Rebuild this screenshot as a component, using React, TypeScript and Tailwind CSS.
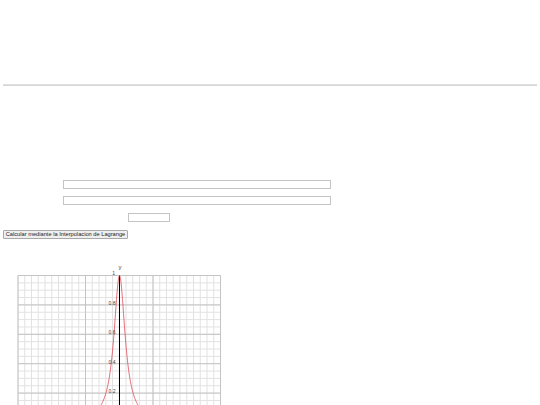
import React from "react";

// plot area, in svg coordinates
const GX = 18;
const GY = 17.5;
const GW = 202.5;
const GH = 170;
const AXIS = GX + 101.5;
const UNIT_Y = 147;

function curvePath() {
  const pts: string[] = [];
  for (let dx = -101.5; dx <= 101; dx += 0.5) {
    const v = 1 / (1 + (dx / 6.8) ** 2);
    const x = AXIS + dx;
    const y = GY + (1 - v) * UNIT_Y;
    pts.push(`${pts.length ? "L" : "M"}${x.toFixed(2)},${y.toFixed(2)}`);
  }
  return pts.join(" ");
}

function Chart() {
  const minorX: number[] = [];
  for (let x = 0; x <= GW + 0.1; x += 6.75) minorX.push(GX + x);
  const majorX = [0, 67.5, 135, 202.5].map((x) => GX + x);
  const minorY: number[] = [];
  for (let y = 0; y <= GH; y += 7.35) minorY.push(GY + y);
  const majorY: number[] = [];
  for (let y = 0; y <= GH; y += 29.4) majorY.push(GY + y);
  const labels = [
    { t: "0.8", y: GY + 29.4 },
    { t: "0.6", y: GY + 58.8 },
    { t: "0.4", y: GY + 88.2 },
    { t: "0.2", y: GY + 117.6 },
  ];

  return (
    <svg width="230" height="147" className="block" style={{ fontFamily: "'Liberation Sans', Arial, sans-serif" }}>
      <defs>
        <clipPath id="plot">
          <rect x={GX} y={GY} width={GW} height={GH} />
        </clipPath>
      </defs>
      <g stroke="#e2e2e2" strokeWidth="1">
        {minorX.map((x) => (
          <line key={"mx" + x} x1={x} y1={GY} x2={x} y2={GY + GH} />
        ))}
        {minorY.map((y) => (
          <line key={"my" + y} x1={GX} y1={y} x2={GX + GW} y2={y} />
        ))}
      </g>
      <g stroke="#c4c4c4" strokeWidth="1">
        {majorX.map((x) => (
          <line key={"Mx" + x} x1={x} y1={GY} x2={x} y2={GY + GH} />
        ))}
        {majorY.map((y) => (
          <line key={"My" + y} x1={GX} y1={y} x2={GX + GW} y2={y} />
        ))}
      </g>
      <line x1={AXIS} y1={GY} x2={AXIS} y2={GY + GH} stroke="#000" strokeWidth="1" />
      <path d={curvePath()} fill="none" stroke="#dc4452" strokeWidth="0.75" clipPath="url(#plot)" />
      <g fill="#444" fontSize="5">
        <text x={AXIS + 0.5} y={GY - 7} fontSize="6" textAnchor="middle">
          y
        </text>
        <text x={AXIS - 4.5} y={GY - 0.5} textAnchor="end">
          1
        </text>
        {labels.map((l) => (
          <text key={l.t} x={AXIS - 4} y={l.y} textAnchor="end">
            {l.t}
          </text>
        ))}
      </g>
    </svg>
  );
}

export default function App() {
  return (
    <div className="bg-white h-[405px] overflow-hidden font-['Liberation_Sans',Arial,sans-serif] text-black">
      <div className="h-[84px]" />
      <div className="mx-[3px] h-[2px] bg-[#e0e0e0] border-b border-[#d6d6d6]" />

      <div className="mt-[93.5px] flex flex-col items-start">
        <input type="text" className="block ml-[63px] w-[268px] h-[9px] border border-[#c4c4c4] bg-white" />
        <input type="text" className="block ml-[63px] mt-[7.5px] w-[268px] h-[9px] border border-[#c4c4c4] bg-white" />
        <input type="text" className="block ml-[128px] mt-[8px] w-[41.5px] h-[9px] border border-[#c4c4c4] bg-white" />
        <button className="block ml-[3px] mt-[7.5px] h-[9px] w-[125px] px-[1px] border border-[#a8a8a8] rounded-[1px] bg-[#efefef] text-[5.7px] leading-[7px] text-[#222] whitespace-nowrap">
          Calcular mediante la Interpolacion de Lagrange
        </button>
      </div>

      <div className="mt-[19.5px]">
        <Chart />
      </div>
    </div>
  );
}
